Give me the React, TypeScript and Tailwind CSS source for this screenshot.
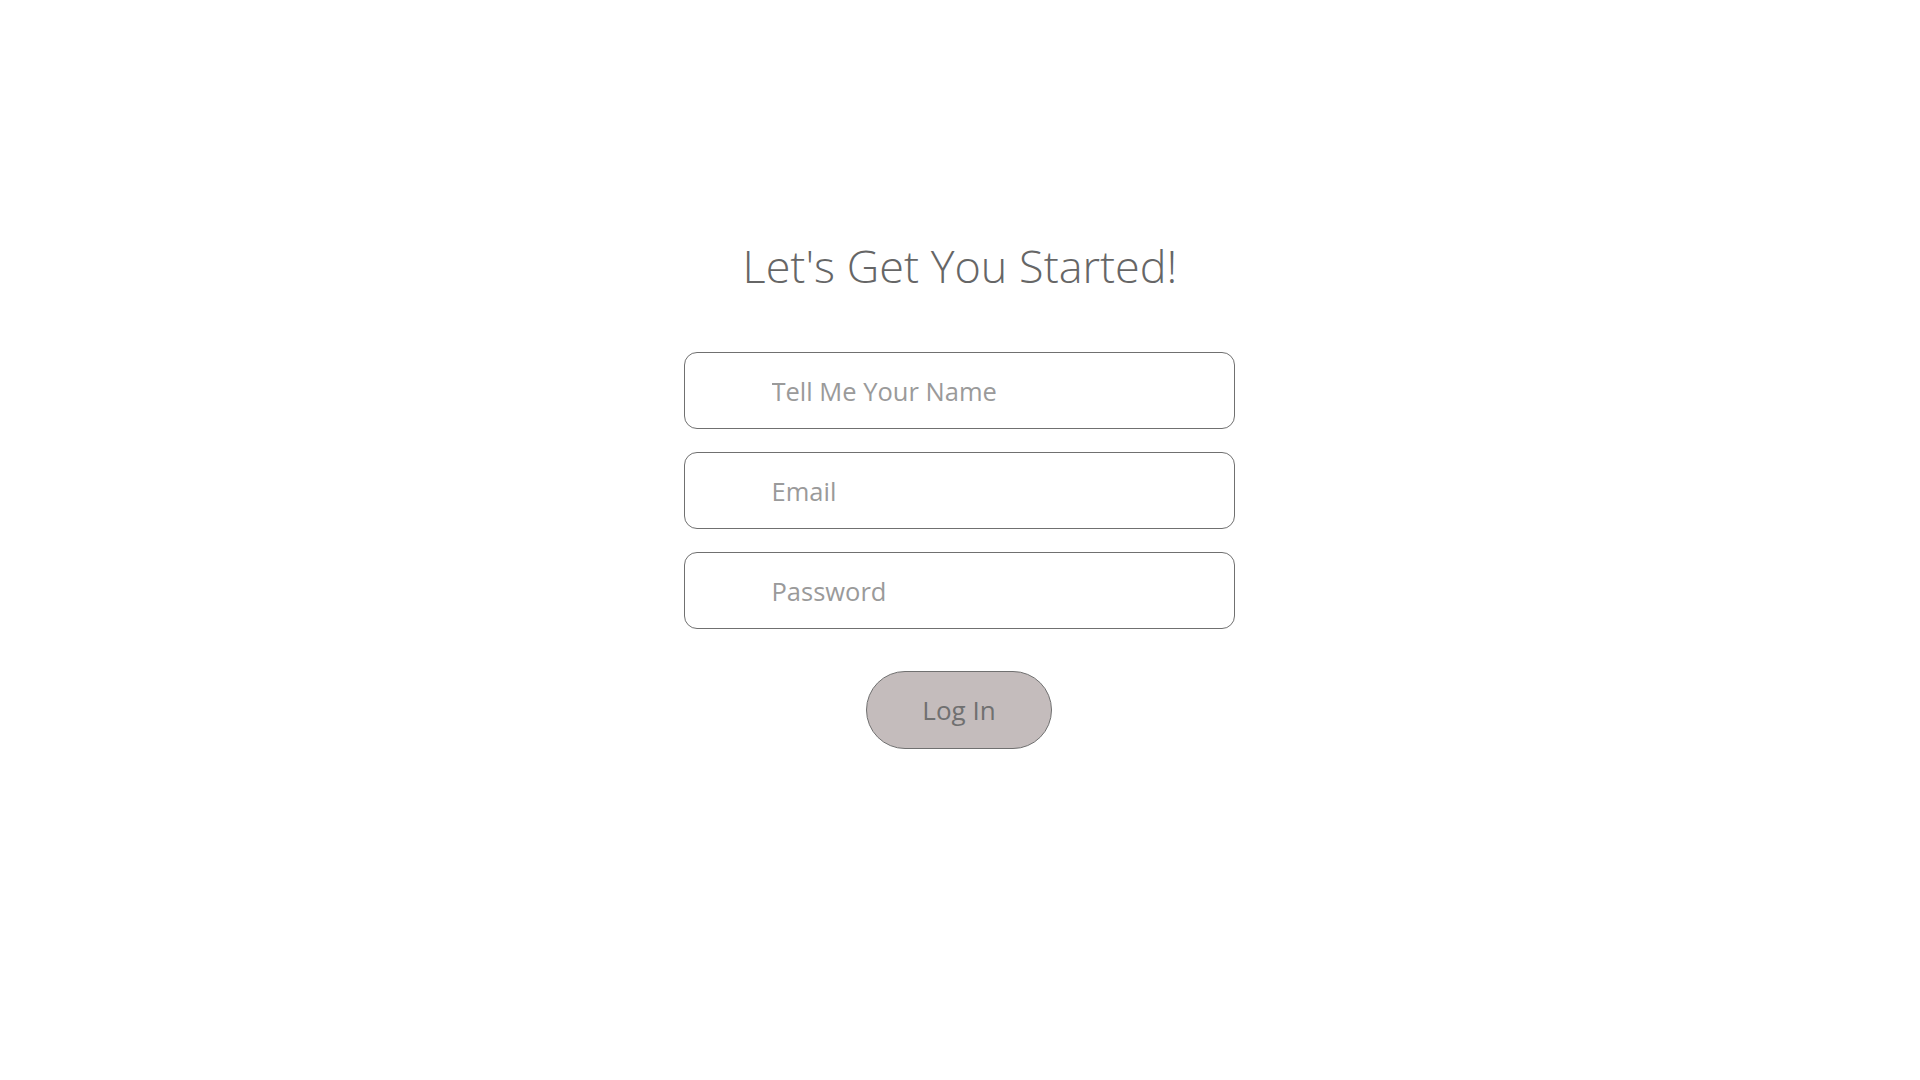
export default function App() {
  const fields = [
    { placeholder: 'Tell Me Your Name', type: 'text' },
    { placeholder: 'Email', type: 'email' },
    { placeholder: 'Password', type: 'password' },
  ];

  return (
    <div className="min-h-screen w-full bg-white font-['Open_Sans',sans-serif]">
      <div className="flex flex-col items-center pt-[238px]">
        {/* Heading */}
        <h1 className="text-[45px] leading-[56px] font-light text-[#666666]">
          Let's Get You Started!
        </h1>

        {/* Form */}
        <form className="mt-[58px] mr-[2px] flex w-[551px] flex-col gap-[23px]">
          {fields.map((f) => (
            <input
              key={f.placeholder}
              type={f.type}
              placeholder={f.placeholder}
              className="h-[77px] w-full rounded-[13px] border border-[#707070] bg-white pl-[87px] pr-6 text-[25.5px] text-[#6b6b6b] outline-none placeholder:text-[#9a9a9a]"
            />
          ))}

          <div className="mt-[19px] flex justify-center">
            <button
              type="button"
              className="h-[78px] w-[186px] rounded-full border border-[#707070] bg-[#c4bcbc] text-[26px] text-[#707070]"
            >
              Log In
            </button>
          </div>
        </form>
      </div>
    </div>
  );
}
